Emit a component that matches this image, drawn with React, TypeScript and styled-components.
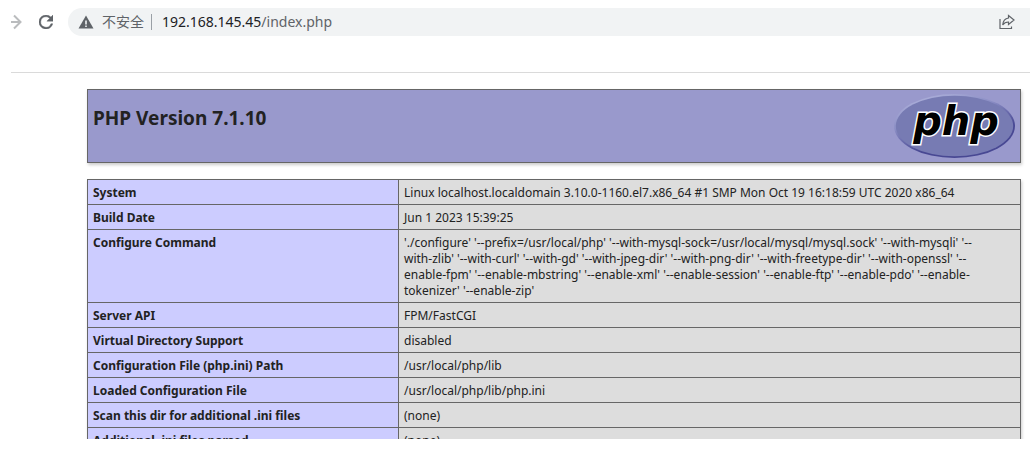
import React from 'react';
import styled, { createGlobalStyle } from 'styled-components';

const GlobalStyle = createGlobalStyle`
  *, *::before, *::after { box-sizing: border-box; }
  body {
    margin: 0;
    background: #fff;
    color: #222;
    font-family: 'Noto Sans', 'Noto Sans CJK SC', sans-serif;
  }
`;

const Browser = styled.div`
  display: flex;
  flex-direction: column;
  height: 100vh;
  padding: 8px 4px 12px 11px;
  overflow: hidden;
`;

const Toolbar = styled.header`
  display: flex;
  flex: none;
  align-items: center;
  padding-bottom: 36px;
  border-bottom: 1px solid #dadada;
`;

const IconButton = styled.button`
  display: flex;
  flex: none;
  padding: 0;
  border: 0;
  background: none;
  color: #5f6368;

  &:disabled { color: #babcbe; }
`;

const NavButton = styled(IconButton)`
  margin-right: 17px;
`;

const ReloadButton = styled(IconButton)`
  margin-right: 15px;
`;

const AddressBar = styled.div`
  display: flex;
  flex: 1;
  align-items: center;
  min-width: 0;
  height: 28px;
  padding: 0 15px 0 10px;
  border-radius: 14px 0 0 14px;
  background: #f1f3f4;
  font-size: 14px;
  line-height: 20px;
`;

const Security = styled.span`
  display: flex;
  align-items: center;
  gap: 8px;
  margin-right: 10px;
  padding-right: 7px;
  border-right: 1px solid #9aa0a6;
  color: #5f6368;
  line-height: 16px;
  white-space: nowrap;
`;

const Url = styled.span`
  flex: 1;
  min-width: 0;
  color: #5f6368;
`;

const Host = styled.span`
  color: #202124;
`;

const Page = styled.main`
  flex: 1;
  min-height: 0;
  padding: 16px 9px 0 76px;
  overflow: hidden;
`;

const Banner = styled.div`
  display: flex;
  justify-content: space-between;
  height: 74px;
  margin-bottom: 16px;
  padding: 4px 5px;
  border: 1px solid #666;
  background: #99c;
  box-shadow: 1px 2px 3px #ccc;
`;

const Title = styled.h1`
  margin: 12px 0 0;
  font-size: 19px;
  line-height: 24px;
`;

const InfoTable = styled.table`
  width: 100%;
  border-collapse: collapse;
  box-shadow: 1px 2px 3px #ccc;
  font-size: 12px;
  line-height: 16px;
  table-layout: fixed;
`;

const Label = styled.th`
  width: 311px;
  padding: 5px 5px 3px;
  border: 1px solid #666;
  background: #ccf;
  text-align: left;
  vertical-align: top;
`;

const Value = styled.td`
  padding: 5px 5px 3px;
  border: 1px solid #666;
  background: #ddd;
  vertical-align: top;
  white-space: pre-line;
`;

const rows: [string, string][] = [
  ['System', 'Linux localhost.localdomain 3.10.0-1160.el7.x86_64 #1 SMP Mon Oct 19 16:18:59 UTC 2020 x86_64'],
  ['Build Date', 'Jun 1 2023 15:39:25'],
  [
    'Configure Command',
    [
      "'./configure' '--prefix=/usr/local/php' '--with-mysql-sock=/usr/local/mysql/mysql.sock' '--with-mysqli' '--",
      "with-zlib' '--with-curl' '--with-gd' '--with-jpeg-dir' '--with-png-dir' '--with-freetype-dir' '--with-openssl' '--",
      "enable-fpm' '--enable-mbstring' '--enable-xml' '--enable-session' '--enable-ftp' '--enable-pdo' '--enable-",
      "tokenizer' '--enable-zip'",
    ].join('\n'),
  ],
  ['Server API', 'FPM/FastCGI'],
  ['Virtual Directory Support', 'disabled'],
  ['Configuration File (php.ini) Path', '/usr/local/php/lib'],
  ['Loaded Configuration File', '/usr/local/php/lib/php.ini'],
  ['Scan this dir for additional .ini files', '(none)'],
  ['Additional .ini files parsed', '(none)'],
];

const ForwardIcon = () => (
  <svg width="11" height="16" viewBox="0 0 11 16" fill="none" stroke="currentColor" strokeWidth="2" aria-hidden="true">
    <path d="M0 8h9M3 1.5L9.5 8L3 14.5" />
  </svg>
);

const ReloadIcon = () => (
  <svg width="14" height="14" viewBox="4 4 16 16" fill="currentColor" aria-hidden="true">
    <path
      d="M17.65 6.35A7.96 7.96 0 0 0 12 4a8 8 0 1 0 7.73 10h-2.08A6 6 0 1 1 12 6c1.66 0 3.14.69 4.22 1.78L13 11h7V4z"
      stroke="currentColor"
      strokeWidth="0.5"
    />
  </svg>
);

const WarningIcon = () => (
  <svg width="16" height="14" viewBox="0 0 16 14" aria-hidden="true">
    <path d="M8 0.5L15.5 13.5H.5z" fill="#5f6368" />
    <path d="M7.2 5.5h1.6v4H7.2zM7.2 10.5h1.6v1.6H7.2z" fill="#f1f3f4" />
  </svg>
);

const ShareIcon = () => (
  <svg width="16" height="16" viewBox="0 0 16 16" fill="none" stroke="currentColor" strokeWidth="1.2" aria-hidden="true">
    <path d="M1 5V14.5H12.5V12.5" />
    <path d="M9.5 1.5L15 6L9.5 10.5V8C6.5 8 5 9 3.7 11C4 7 6 4.500 9.500 4z" />
  </svg>
);

const PhpLogo = () => (
  <svg width="121" height="65" viewBox="0 0 121 65" role="img" aria-label="PHP logo">
    <defs>
      <linearGradient id="rim" x1="0.2" y1="0" x2="0.75" y2="1">
        <stop offset="0" stopColor="#b0b3dc" />
        <stop offset="0.35" stopColor="#8a8dc4" />
        <stop offset="0.7" stopColor="#484893" />
        <stop offset="1" stopColor="#484893" />
      </linearGradient>
    </defs>
    <ellipse cx="60.5" cy="32" rx="60.5" ry="32" fill="url(#rim)" />
    <ellipse cx="60.5" cy="32" rx="58.7" ry="30.3" fill="#777bb3" />
    <text
      x="62"
      y="41"
      textAnchor="middle"
      fontFamily="'DejaVu Sans', sans-serif"
      fontSize="40"
      fontWeight="700"
      fontStyle="italic"
      fill="#000"
      stroke="#fff"
      strokeWidth="3"
      paintOrder="stroke"
    >
      php
    </text>
  </svg>
);

export default function App() {
  return (
    <>
      <GlobalStyle />
      <Browser>
        <Toolbar>
          <NavButton type="button" aria-label="Forward" disabled>
            <ForwardIcon />
          </NavButton>
          <ReloadButton type="button" aria-label="Reload">
            <ReloadIcon />
          </ReloadButton>
          <AddressBar>
            <Security>
              <WarningIcon />
              不安全
            </Security>
            <Url>
              <Host>192.168.145.45</Host>/index.php
            </Url>
            <IconButton type="button" aria-label="Share">
              <ShareIcon />
            </IconButton>
          </AddressBar>
        </Toolbar>
        <Page>
          <Banner>
            <Title>PHP Version 7.1.10</Title>
            <PhpLogo />
          </Banner>
          <InfoTable>
            <tbody>
              {rows.map(([label, value]) => (
                <tr key={label}>
                  <Label scope="row">{label}</Label>
                  <Value>{value}</Value>
                </tr>
              ))}
            </tbody>
          </InfoTable>
        </Page>
      </Browser>
    </>
  );
}
